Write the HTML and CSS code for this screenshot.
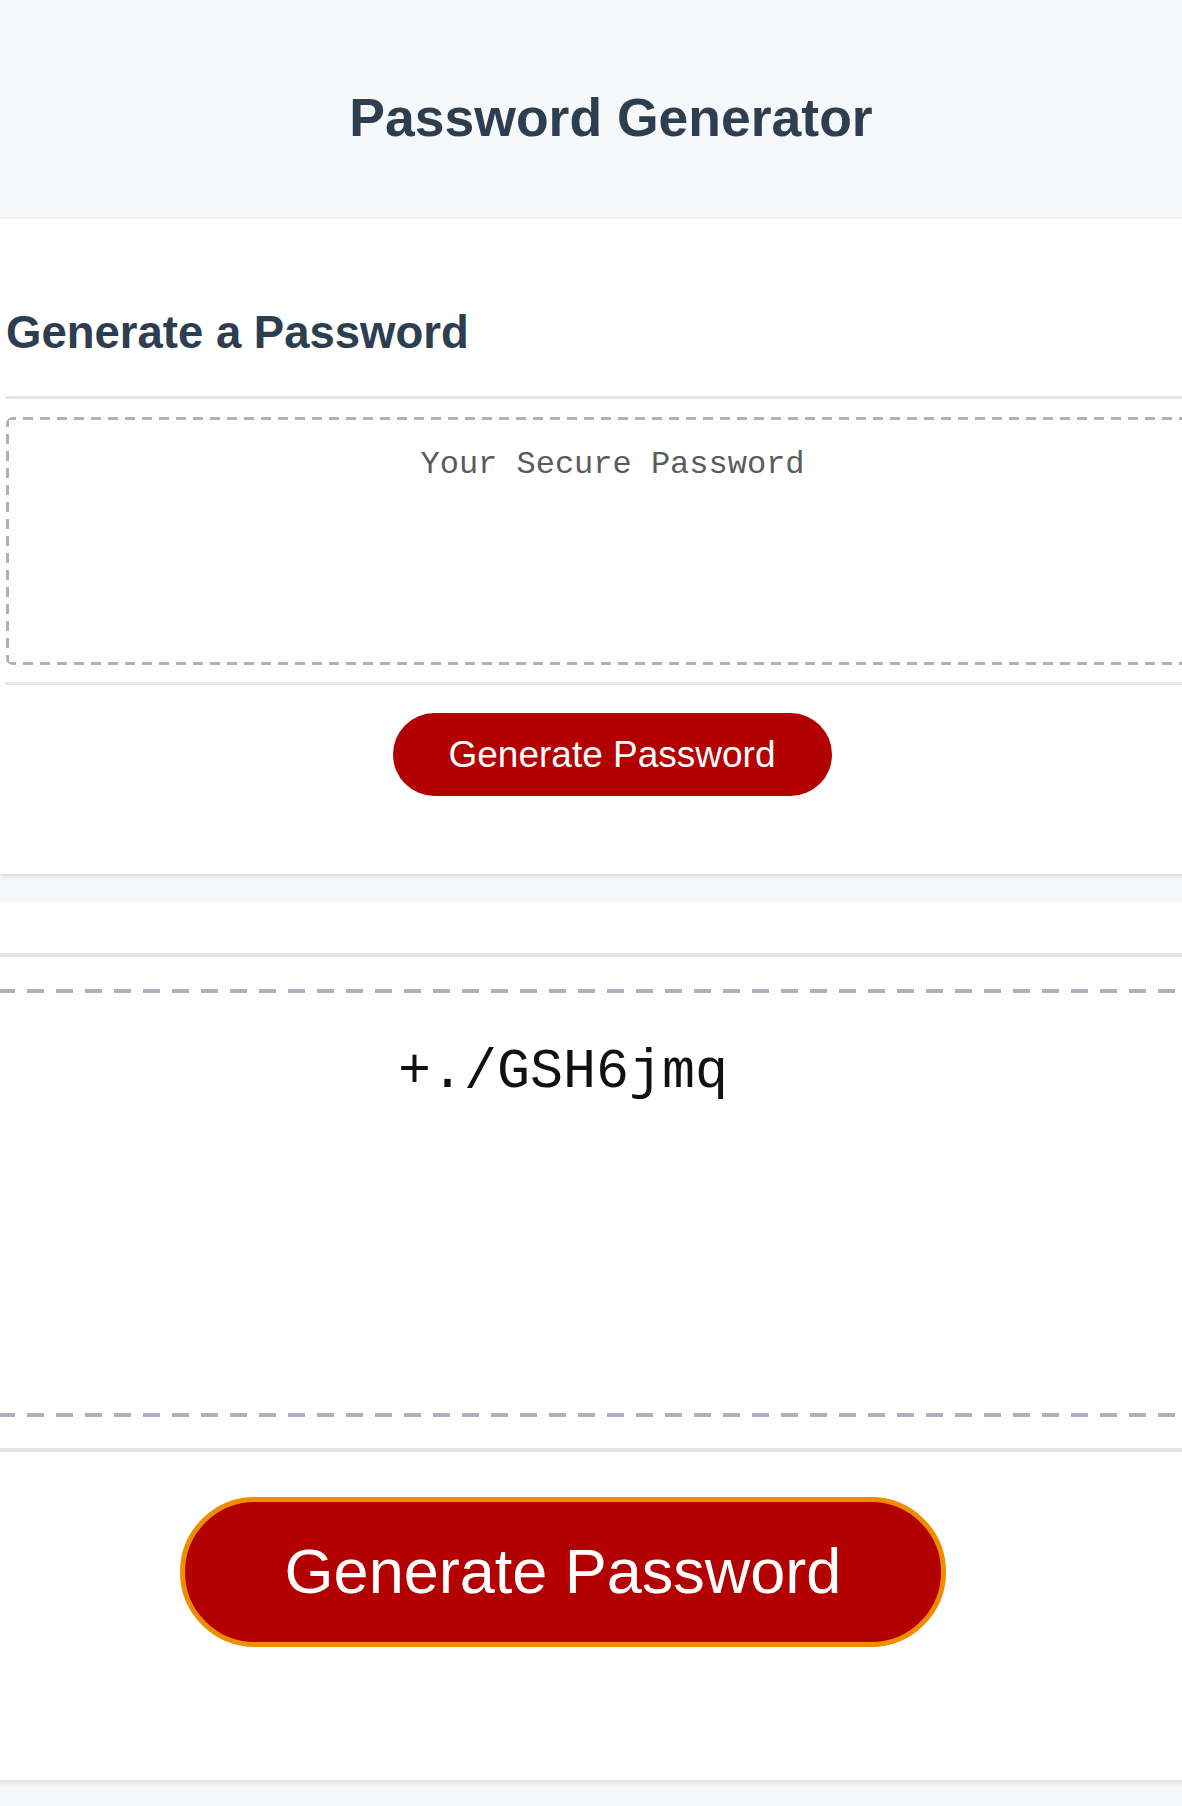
FILE: index.html
```html
<!DOCTYPE html>
<html lang="en">
<head>
<meta charset="utf-8">
<title>Password Generator</title>
<link rel="stylesheet" href="styles.css">
</head>
<body>
<header class="site-header">
  <h1 class="site-title">Password Generator</h1>
</header>
<main class="wrapper">
  <section class="card card-main">
    <h2 class="card-title">Generate a Password</h2>
    <div class="card-body">
      <div class="password-box">
        <span class="password-text placeholder">Your Secure Password</span>
      </div>
    </div>
    <div class="card-footer">
      <button class="btn" type="button">Generate Password</button>
    </div>
  </section>
  <section class="card card-zoom">
    <div class="card-body">
      <div class="password-box">
        <span class="password-text result">+./GSH6jmq</span>
      </div>
    </div>
    <div class="card-footer">
      <button class="btn btn-focus" type="button">Generate Password</button>
    </div>
  </section>
</main>
</body>
</html>
```
FILE: styles.css
```css
* {
  box-sizing: border-box;
}

html,
body {
  margin: 0;
  padding: 0;
  overflow: hidden;
}

body {
  background: #f5f7f9;
  font-family: "Liberation Sans", Arial, Helvetica, sans-serif;
  color: #2c3e50;
  height: 1806px;
}

.site-header {
  width: 1222px;
  height: 217px;
  padding-top: 91px;
  background: #f6f8fa;
  box-shadow: 0 1px 3px rgba(0, 0, 0, 0.12);
  position: relative;
  z-index: 2;
  text-align: center;
}

.site-title {
  margin: 0;
  font-size: 53.5px;
  line-height: 1;
  font-weight: 700;
  color: #2c3e50;
}

.wrapper {
  display: flex;
  flex-direction: column;
  gap: 28px;
}

.card {
  background: #fff;
  box-shadow: 0 2px 5px rgba(0, 0, 0, 0.12);
}

.card-main {
  width: 1219px;
  padding: 92px 0 78px 5px;
}

.card-title {
  margin: 0 0 40px 0;
  font-size: 45.5px;
  line-height: 1;
  font-weight: 700;
  color: #2c3e50;
  padding-left: 1px;
  padding-top: 1px;
}

.card-body {
  border-top: 3px solid #e3e7eb;
  border-bottom: 3px solid #e3e7eb;
  padding: 18px 0 17px 0;
}

.password-box {
  --dash-c: #a9b3bd;
  --dash-w: 3px;
  --dash-l: 10px;
  --dash-p: 17px;
  height: 248px;
  border-radius: 7px;
  padding-top: 32px;
  margin-left: 1px;
  text-align: center;
  background:
    repeating-linear-gradient(90deg, var(--dash-c) 0 var(--dash-l), transparent var(--dash-l) var(--dash-p)) top left / 100% var(--dash-w) no-repeat,
    repeating-linear-gradient(90deg, var(--dash-c) 0 var(--dash-l), transparent var(--dash-l) var(--dash-p)) bottom left / 100% var(--dash-w) no-repeat,
    repeating-linear-gradient(180deg, var(--dash-c) 0 var(--dash-l), transparent var(--dash-l) var(--dash-p)) top left / var(--dash-w) 100% no-repeat,
    repeating-linear-gradient(180deg, var(--dash-c) 0 var(--dash-l), transparent var(--dash-l) var(--dash-p)) top right / var(--dash-w) 100% no-repeat;
}

.password-text {
  font-family: "Liberation Mono", "Courier New", monospace;
  line-height: 1;
  display: inline-block;
}

.placeholder {
  font-size: 32px;
  color: #5b5b5b;
}

.card-footer {
  display: flex;
  justify-content: center;
  padding-top: 28px;
}

.btn {
  width: 439px;
  height: 83px;
  border: none;
  border-radius: 42px;
  background: #b30000;
  color: #fff;
  font-family: "Liberation Sans", Arial, Helvetica, sans-serif;
  font-size: 37px;
  line-height: 1;
  padding: 0;
  display: flex;
  align-items: center;
  justify-content: center;
}

/* enlarged second panel */
.card-zoom {
  width: 1246px;
  margin-left: -60px;
  padding: 51px 0 133px 0;
}

.card-zoom .card-body {
  border-top-width: 4px;
  border-bottom-width: 4px;
  padding: 32px 0 31px 0;
}

.card-zoom .password-box {
  --dash-w: 4px;
  --dash-l: 17px;
  --dash-p: 29px;
  height: 428px;
  padding-top: 56px;
  margin-left: 0;
}

.result {
  font-size: 55px;
  color: #111;
}

.card-zoom .card-footer {
  padding-top: 45px;
}

.btn-focus {
  width: 766px;
  height: 150px;
  border-radius: 75px;
  border: 5px solid #f08c00;
  font-size: 63px;
}
```
